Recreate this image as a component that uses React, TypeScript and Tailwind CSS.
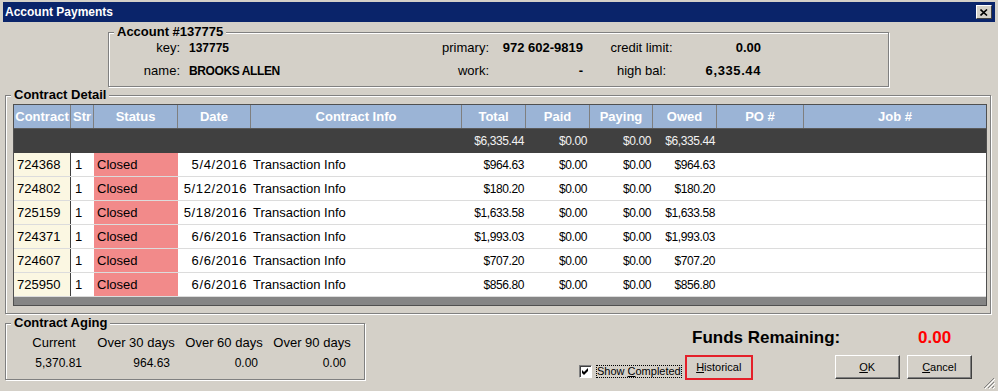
import React from "react";

const COLS =
  "grid grid-cols-[57px_23px_84px_73px_211px_64px_64px_63px_64px_87px_182px]";

const rows = [
  ["724368", "5/4/2016", "$964.63", "$964.63"],
  ["724802", "5/12/2016", "$180.20", "$180.20"],
  ["725159", "5/18/2016", "$1,633.58", "$1,633.58"],
  ["724371", "6/6/2016", "$1,993.03", "$1,993.03"],
  ["724607", "6/6/2016", "$707.20", "$707.20"],
  ["725950", "6/6/2016", "$856.80", "$856.80"],
];

const headers = [
  "Contract",
  "Str",
  "Status",
  "Date",
  "Contract Info",
  "Total",
  "Paid",
  "Paying",
  "Owed",
  "PO #",
  "Job #",
];

function Btn({ children, className = "" }: { children: React.ReactNode; className?: string }) {
  return (
    <div
      className={
        "h-[24px] w-[65px] flex items-center justify-center text-[11px] border border-t-white border-l-white border-r-[#404040] border-b-[#404040] shadow-[inset_-1px_-1px_0_#808080] " +
        className
      }
    >
      {children}
    </div>
  );
}

export default function App() {
  return (
    <div className="w-[998px] h-[391px] bg-[#d4d0c8] relative overflow-hidden pt-[2px] px-[3px] font-['Liberation_Sans',Arial,sans-serif] text-[13px] text-black">
      {/* Title bar */}
      <div className="h-[20px] bg-[#0a246a] flex items-center justify-between pl-[2px] pr-[3px]">
        <span className="text-white font-bold text-[12px] leading-none">Account Payments</span>
        <div className="w-[16px] h-[14px] bg-[#d4d0c8] border border-t-white border-l-white border-r-[#404040] border-b-[#404040] flex items-center justify-center">
          <svg width="8" height="7" viewBox="0 0 8 7">
            <path d="M0.5 0.5 L7 6.5 M7 0.5 L0.5 6.5" stroke="black" strokeWidth="1.6" />
          </svg>
        </div>
      </div>

      {/* Account box */}
      <div className="mt-[10px] ml-[105px] w-[781px] h-[55px] relative border border-[#808080] shadow-[inset_1px_1px_0_#fff,1px_1px_0_#fff] pt-[3px]">
        <span className="absolute -top-[9px] left-[5px] px-[3px] bg-[#d4d0c8] font-bold text-[13px] leading-[16px]">
          Account #137775
        </span>
        <div className="grid grid-cols-[71px_250px_59px_94px_117px_61px] grid-rows-[23px_23px] items-center leading-none">
          <div className="text-right">key:</div>
          <div className="pl-[9px] font-bold text-[12px]">137775</div>
          <div className="text-right">primary:</div>
          <div className="text-right font-bold text-[13px]">972 602-9819</div>
          <div className="text-center">credit limit:</div>
          <div className="text-right font-bold text-[13px]">0.00</div>

          <div className="text-right">name:</div>
          <div className="pl-[9px] font-bold text-[12px] tracking-[-0.4px]">BROOKS ALLEN</div>
          <div className="text-right">work:</div>
          <div className="text-right font-bold text-[13px]">-</div>
          <div className="text-center">high bal:</div>
          <div className="text-right font-bold text-[13px] tracking-[0.6px]">6,335.44</div>
        </div>
      </div>

      {/* Contract Detail */}
      <div className="mt-[8px] ml-[2px] w-[986px] h-[219px] relative border border-[#808080] shadow-[inset_1px_1px_0_#fff,1px_1px_0_#fff] pt-[8px] pl-[7px]">
        <span className="absolute -top-[9px] left-[5px] px-[3px] bg-[#d4d0c8] font-bold text-[13px] leading-[16px]">
          Contract Detail
        </span>
        <div className="w-[974px] h-[202px] border border-[#505050] bg-[#858585] flex flex-col">
          {/* header */}
          <div className={COLS + " h-[24px] bg-[#9bb4d6] border-b border-[#5a5a5a] shrink-0"}>
            {headers.map((h, i) => (
              <div
                key={h}
                className={
                  "flex items-center justify-center text-white font-bold text-[13px] leading-none " +
                  (i < headers.length - 1 ? "border-r border-[#7f7f7f]" : "")
                }
              >
                {h}
              </div>
            ))}
          </div>
          {/* totals row */}
          <div className={COLS + " h-[24px] bg-[#404040] text-[#f2f2f2] text-[12px] tracking-[-0.4px] leading-none shrink-0"}>
            <div />
            <div />
            <div />
            <div />
            <div />
            <div className="flex items-center justify-end pr-[2px]">$6,335.44</div>
            <div className="flex items-center justify-end pr-[3px]">$0.00</div>
            <div className="flex items-center justify-end pr-[2px]">$0.00</div>
            <div className="flex items-center justify-end pr-[2px]">$6,335.44</div>
            <div />
            <div />
          </div>
          {/* data rows */}
          {rows.map((r) => (
            <div
              key={r[0]}
              className={COLS + " h-[24px] bg-white border-b border-[#dcdcdc] leading-none shrink-0"}
            >
              <div className="bg-[#fbf7e2] border-r border-[#404040] flex items-center pl-[3px]">{r[0]}</div>
              <div className="flex items-center pl-[4px]">1</div>
              <div className="bg-[#f28a8a] flex items-center pl-[3px]">Closed</div>
              <div className="flex items-center justify-end pr-[4px] tracking-[0.6px]">{r[1]}</div>
              <div className="flex items-center pl-[2px]">Transaction Info</div>
              <div className="flex items-center justify-end pr-[2px] text-[12px] tracking-[-0.4px]">{r[2]}</div>
              <div className="flex items-center justify-end pr-[3px] text-[12px] tracking-[-0.4px]">$0.00</div>
              <div className="flex items-center justify-end pr-[2px] text-[12px] tracking-[-0.4px]">$0.00</div>
              <div className="flex items-center justify-end pr-[2px] text-[12px] tracking-[-0.4px]">{r[3]}</div>
              <div />
              <div />
            </div>
          ))}
        </div>
      </div>

      {/* Bottom */}
      <div className="flex items-start mt-[9px]">
        <div className="ml-[2px] w-[360px] h-[57px] relative border border-[#808080] shadow-[inset_1px_1px_0_#fff,1px_1px_0_#fff] pt-[8px] pl-[4px]">
          <span className="absolute -top-[9px] left-[5px] px-[3px] bg-[#d4d0c8] font-bold text-[13px] leading-[16px]">
            Contract Aging
          </span>
          <div className="grid grid-cols-[88px_88px_88px_88px] grid-rows-[20px_20px] gap-y-[1px] items-center leading-none">
            <div className="text-center whitespace-nowrap">Current</div>
            <div className="text-center whitespace-nowrap ml-[-12px]">Over 30 days</div>
            <div className="text-center whitespace-nowrap ml-[-12px]">Over 60 days</div>
            <div className="text-center whitespace-nowrap ml-[-12px]">Over 90 days</div>
            <div className="text-right pr-[16px] text-[12px]">5,370.81</div>
            <div className="text-right pr-[16px] text-[12px]">964.63</div>
            <div className="text-right pr-[16px] text-[12px]">0.00</div>
            <div className="text-right pr-[16px] text-[12px]">0.00</div>
          </div>
        </div>

        <div className="flex flex-col pt-[4px]">
          <div className="flex items-center h-[20px] ml-[327px] font-bold text-[17px] leading-none">
            <div className="w-[226px]">Funds Remaining:</div>
            <div className="text-[#ff0000]">0.00</div>
          </div>
          <div className="flex items-start mt-[8px]">
            <div className="ml-[214px] mt-[10px] flex items-center">
              <div className="w-[13px] h-[13px] bg-white border border-t-[#808080] border-l-[#808080] border-b-white border-r-white shadow-[inset_1px_1px_0_#404040] flex items-center justify-center">
                <svg width="7" height="7" viewBox="0 0 7 7">
                  <path d="M0 2 L2 4 L6 0 L6 3 L2 7 L0 5 Z" fill="black" />
                </svg>
              </div>
              <div className="ml-[4px] border border-dotted border-black h-[13px] flex items-center text-[11px] leading-none">
                Show <span className="ml-[3px] underline">C</span>ompleted
              </div>
            </div>
            <div className="ml-[3px] w-[68px] h-[25px] border-2 border-[#e4202a] flex items-center justify-center text-[11px] leading-none">
              <span className="underline">H</span>istorical
            </div>
            <Btn className="ml-[82px]">
              <span className="underline">O</span>K
            </Btn>
            <Btn className="ml-[7px]">
              <span className="underline">C</span>ancel
            </Btn>
          </div>
        </div>
      </div>

      {/* resize grip */}
      <svg className="absolute right-[3px] bottom-[2px]" width="12" height="12" viewBox="0 0 12 12">
        <path d="M11 1 L1 11 M11 5 L5 11 M11 9 L9 11" stroke="#808080" strokeWidth="1" />
        <path d="M12 2 L2 12 M12 6 L6 12 M12 10 L10 12" stroke="#ffffff" strokeWidth="1" />
      </svg>
    </div>
  );
}
